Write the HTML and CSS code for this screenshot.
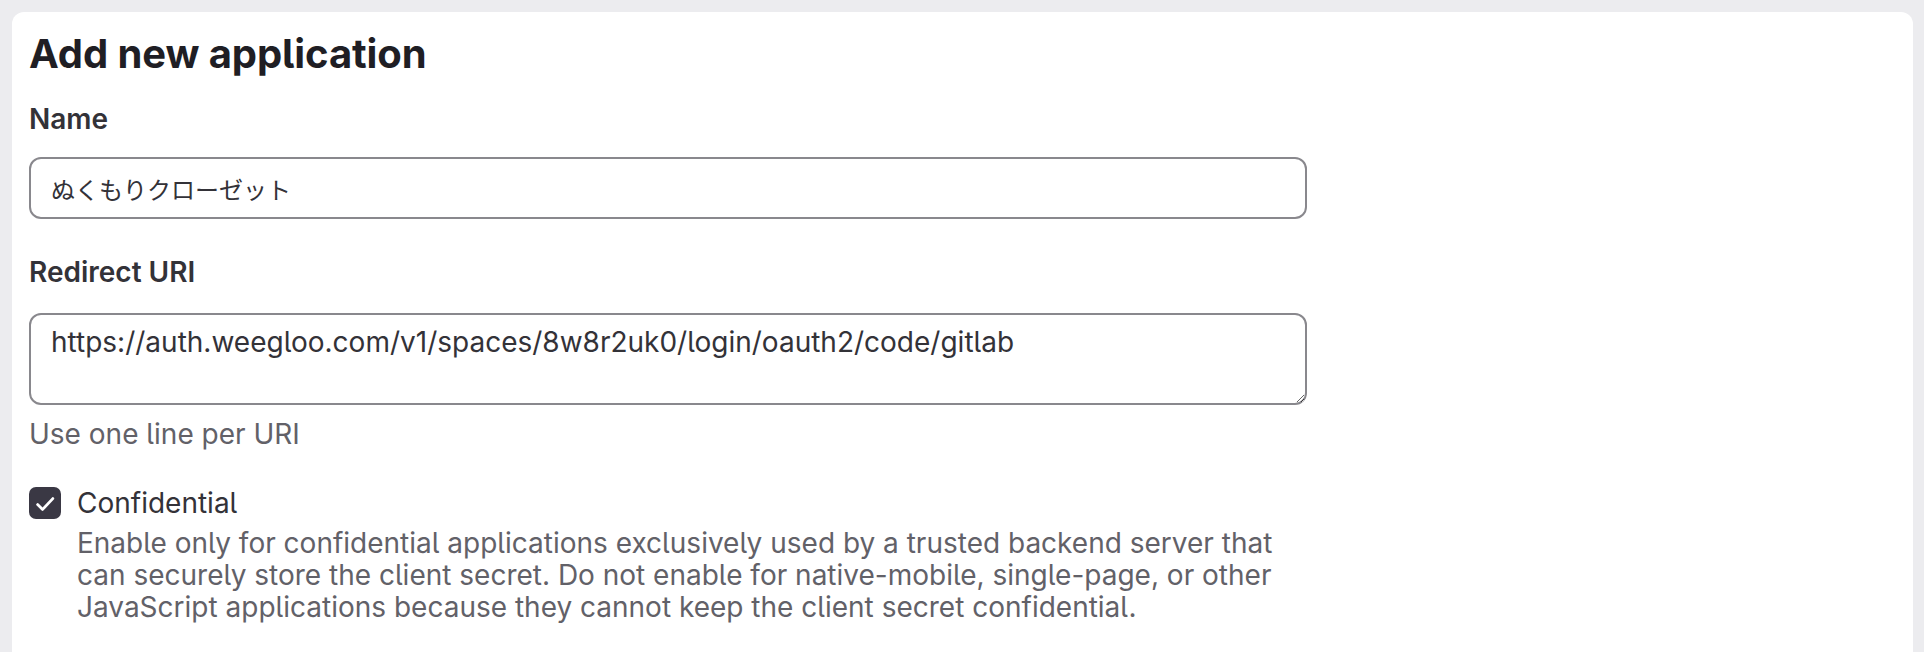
FILE: index.html
```html
<!DOCTYPE html>
<html lang="en">
<head>
<meta charset="utf-8">
<title>Add new application</title>
<link rel="stylesheet" href="styles.css">
</head>
<body>
<main class="card">
  <h1 class="title">Add new application</h1>
  <form class="form">
    <div class="field">
      <label class="label" for="app-name">Name</label>
      <input class="input" id="app-name" type="text" value="ぬくもりクローゼット">
    </div>
    <div class="field field-uri">
      <label class="label" for="app-uri">Redirect URI</label>
      <textarea class="textarea" id="app-uri" rows="2">https://auth.weegloo.com/v1/spaces/8w8r2uk0/login/oauth2/code/gitlab</textarea>
      <p class="help">Use one line per URI</p>
    </div>
    <div class="check">
      <span class="box">
        <svg viewBox="0 0 32 32" width="32" height="32" aria-hidden="true">
          <path d="M8.6 17.6 L13.6 22.4 L23.8 11.6" fill="none" stroke="#fff" stroke-width="2.8" stroke-linecap="round" stroke-linejoin="round"/>
        </svg>
      </span>
      <div class="check-body">
        <div class="check-label">Confidential</div>
        <p class="check-help">Enable only for confidential applications exclusively used by a trusted backend server that can securely store the client secret. Do not enable for native-mobile, single-page, or other JavaScript applications because they cannot keep the client secret confidential.</p>
      </div>
    </div>
  </form>
</main>
</body>
</html>
```

FILE: styles.css
```css
* { box-sizing: border-box; }
html, body { height: 100%; }
body {
  margin: 0;
  background: #ececef;
  font-family: Inter, "Noto Sans CJK JP", "Liberation Sans", sans-serif;
  font-feature-settings: "cv05" 1;
  color: #333238;
  overflow: hidden;
}
.card {
  margin: 12px 11px 0 12px;
  min-height: calc(100vh - 12px);
  background: #fff;
  border-radius: 12px 12px 0 0;
  padding: 18px 0 0 17px;
}
.title {
  margin: 0;
  font-size: 40px;
  line-height: 48px;
  font-weight: 700;
  color: #1f1e24;
  letter-spacing: -0.1px;
}
.form { width: 1278px; }
.field { display: flex; flex-direction: column; margin-top: 25px; }
.field-uri { margin-top: 37px; }
.label {
  font-size: 28px;
  line-height: 32px;
  font-weight: 600;
  color: #333238;
  margin-bottom: 22px;
}
.field-uri .label { margin-bottom: 25px; }
.input, .textarea {
  font-family: inherit;
  font-feature-settings: "cv05" 1;
  font-size: 28px;
  color: #333238;
  border: 2px solid #89888d;
  border-radius: 12px;
  background: #fff;
  width: 100%;
  outline: none;
}
.input {
  height: 62px;
  padding: 0 20px;
  font-size: 24px;
}
.textarea {
  height: 92px;
  padding: 11px 20px;
  line-height: 32px;
  resize: vertical;
}
.help {
  margin: 13px 0 0;
  font-size: 28px;
  line-height: 32px;
  color: #626168;
}
.check {
  display: flex;
  align-items: flex-start;
  gap: 16px;
  margin-top: 37px;
}
.box {
  flex: none;
  width: 32px;
  height: 32px;
  border-radius: 7px;
  background: #3a3844;
  display: flex;
  align-items: center;
  justify-content: center;
}
.check-body { width: 1230px; }
.check-label {
  font-size: 28px;
  line-height: 32px;
  color: #333238;
}
.check-help {
  margin: 8px 0 0;
  font-size: 28px;
  line-height: 32px;
  color: #626168;
}
```
